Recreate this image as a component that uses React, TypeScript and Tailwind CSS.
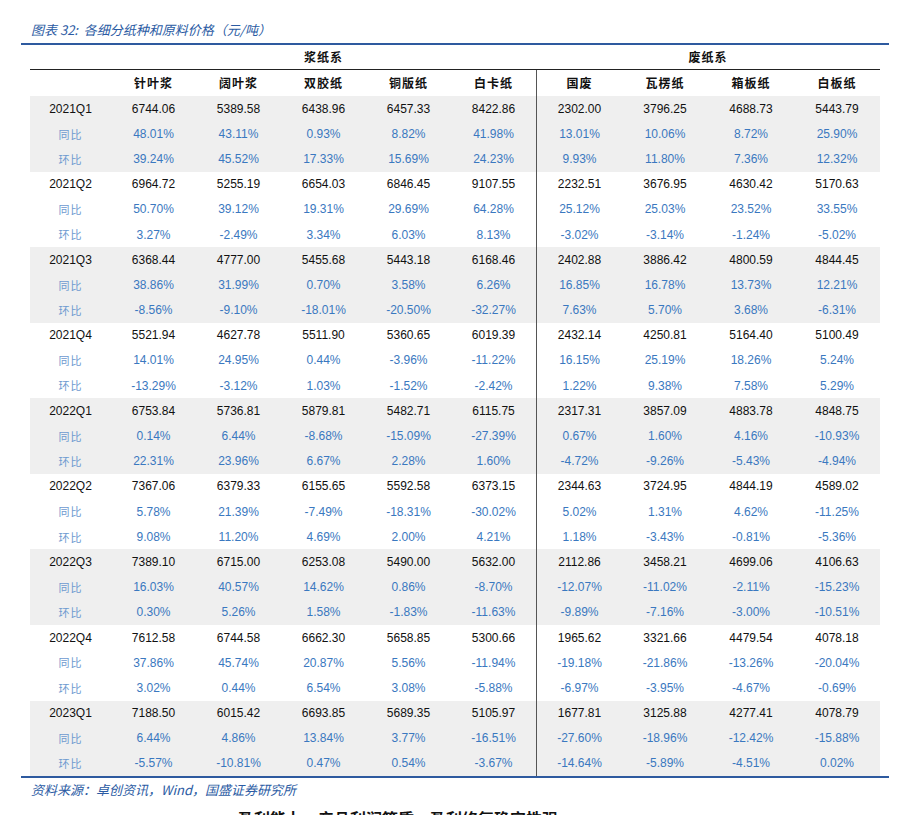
const LEFT = ['针叶浆', '阔叶浆', '双胶纸', '铜版纸', '白卡纸'];
const RIGHT = ['国废', '瓦楞纸', '箱板纸', '白板纸'];

type Block = { q: string; price: string[]; yoy: string[]; qoq: string[] };

const blocks: Block[] = [
  {
    q: '2021Q1',
    price: ['6744.06', '5389.58', '6438.96', '6457.33', '8422.86', '2302.00', '3796.25', '4688.73', '5443.79'],
    yoy: ['48.01%', '43.11%', '0.93%', '8.82%', '41.98%', '13.01%', '10.06%', '8.72%', '25.90%'],
    qoq: ['39.24%', '45.52%', '17.33%', '15.69%', '24.23%', '9.93%', '11.80%', '7.36%', '12.32%'],
  },
  {
    q: '2021Q2',
    price: ['6964.72', '5255.19', '6654.03', '6846.45', '9107.55', '2232.51', '3676.95', '4630.42', '5170.63'],
    yoy: ['50.70%', '39.12%', '19.31%', '29.69%', '64.28%', '25.12%', '25.03%', '23.52%', '33.55%'],
    qoq: ['3.27%', '-2.49%', '3.34%', '6.03%', '8.13%', '-3.02%', '-3.14%', '-1.24%', '-5.02%'],
  },
  {
    q: '2021Q3',
    price: ['6368.44', '4777.00', '5455.68', '5443.18', '6168.46', '2402.88', '3886.42', '4800.59', '4844.45'],
    yoy: ['38.86%', '31.99%', '0.70%', '3.58%', '6.26%', '16.85%', '16.78%', '13.73%', '12.21%'],
    qoq: ['-8.56%', '-9.10%', '-18.01%', '-20.50%', '-32.27%', '7.63%', '5.70%', '3.68%', '-6.31%'],
  },
  {
    q: '2021Q4',
    price: ['5521.94', '4627.78', '5511.90', '5360.65', '6019.39', '2432.14', '4250.81', '5164.40', '5100.49'],
    yoy: ['14.01%', '24.95%', '0.44%', '-3.96%', '-11.22%', '16.15%', '25.19%', '18.26%', '5.24%'],
    qoq: ['-13.29%', '-3.12%', '1.03%', '-1.52%', '-2.42%', '1.22%', '9.38%', '7.58%', '5.29%'],
  },
  {
    q: '2022Q1',
    price: ['6753.84', '5736.81', '5879.81', '5482.71', '6115.75', '2317.31', '3857.09', '4883.78', '4848.75'],
    yoy: ['0.14%', '6.44%', '-8.68%', '-15.09%', '-27.39%', '0.67%', '1.60%', '4.16%', '-10.93%'],
    qoq: ['22.31%', '23.96%', '6.67%', '2.28%', '1.60%', '-4.72%', '-9.26%', '-5.43%', '-4.94%'],
  },
  {
    q: '2022Q2',
    price: ['7367.06', '6379.33', '6155.65', '5592.58', '6373.15', '2344.63', '3724.95', '4844.19', '4589.02'],
    yoy: ['5.78%', '21.39%', '-7.49%', '-18.31%', '-30.02%', '5.02%', '1.31%', '4.62%', '-11.25%'],
    qoq: ['9.08%', '11.20%', '4.69%', '2.00%', '4.21%', '1.18%', '-3.43%', '-0.81%', '-5.36%'],
  },
  {
    q: '2022Q3',
    price: ['7389.10', '6715.00', '6253.08', '5490.00', '5632.00', '2112.86', '3458.21', '4699.06', '4106.63'],
    yoy: ['16.03%', '40.57%', '14.62%', '0.86%', '-8.70%', '-12.07%', '-11.02%', '-2.11%', '-15.23%'],
    qoq: ['0.30%', '5.26%', '1.58%', '-1.83%', '-11.63%', '-9.89%', '-7.16%', '-3.00%', '-10.51%'],
  },
  {
    q: '2022Q4',
    price: ['7612.58', '6744.58', '6662.30', '5658.85', '5300.66', '1965.62', '3321.66', '4479.54', '4078.18'],
    yoy: ['37.86%', '45.74%', '20.87%', '5.56%', '-11.94%', '-19.18%', '-21.86%', '-13.26%', '-20.04%'],
    qoq: ['3.02%', '0.44%', '6.54%', '3.08%', '-5.88%', '-6.97%', '-3.95%', '-4.67%', '-0.69%'],
  },
  {
    q: '2023Q1',
    price: ['7188.50', '6015.42', '6693.85', '5689.35', '5105.97', '1677.81', '3125.88', '4277.41', '4078.79'],
    yoy: ['6.44%', '4.86%', '13.84%', '3.77%', '-16.51%', '-27.60%', '-18.96%', '-12.42%', '-15.88%'],
    qoq: ['-5.57%', '-10.81%', '0.47%', '0.54%', '-3.67%', '-14.64%', '-5.89%', '-4.51%', '0.02%'],
  },
];

const GRID = 'grid grid-cols-[81px_repeat(5,85px)_repeat(4,86px)]';
const NUM = "font-['Liberation_Sans',Arial,sans-serif] text-[12px]";
const CJK = "font-['Noto_Sans_CJK_SC',sans-serif]";

function Row({ label, values, kind, shaded }: { label: string; values: string[]; kind: 'price' | 'ratio'; shaded: boolean }) {
  return (
    <div className={`${GRID} h-[25.2px] ${shaded ? 'bg-[#efefef]' : 'bg-white'}`}>
      <div
        className={
          kind === 'price'
            ? `${NUM} flex items-center justify-center text-[#111]`
            : `${CJK} flex items-center justify-center text-[11px] tracking-[1px] text-[#6d9ad0]`
        }
      >
        {label}
      </div>
      {values.map((v, i) => (
        <div
          key={i}
          className={`${NUM} flex items-center justify-center ${kind === 'price' ? 'text-[#111]' : 'text-[#3a78c0]'} ${i === 5 ? 'border-l border-[#555]' : ''}`}
        >
          {v}
        </div>
      ))}
    </div>
  );
}

export default function App() {
  return (
    <div className="h-[815px] overflow-hidden bg-white">
      <div className="ml-[21px] w-[868px] pt-[20px]">
        <p className={`${CJK} h-[20px] pl-[10px] text-[13px] italic leading-[20px] text-[#2b5ba3]`}>
          图表 32:&nbsp; 各细分纸种和原料价格（元/吨）
        </p>
        <div className="mt-[3px] h-[2px] bg-[#2e5a9f]" />

        <div className="ml-[9px] w-[850px]">
          <div className={`${GRID} h-[25px] border-b border-[#222]`}>
            <div />
            <div className={`${CJK} col-span-5 flex items-center justify-center text-[12px] font-bold tracking-[1px] text-[#111]`}>
              浆纸系
            </div>
            <div className={`${CJK} col-span-4 flex items-center justify-center text-[12px] font-bold tracking-[1px] text-[#111]`}>
              废纸系
            </div>
          </div>
          <div className={`${GRID} h-[26px]`}>
            <div />
            {[...LEFT, ...RIGHT].map((h, i) => (
              <div
                key={h}
                className={`${CJK} flex items-center justify-center text-[12px] font-bold tracking-[1px] text-[#111] ${i === 5 ? 'border-l border-[#555]' : ''}`}
              >
                {h}
              </div>
            ))}
          </div>
          {blocks.map((b, i) => {
            const shaded = i % 2 === 0;
            return (
              <div key={b.q}>
                <Row label={b.q} values={b.price} kind="price" shaded={shaded} />
                <Row label="同比" values={b.yoy} kind="ratio" shaded={shaded} />
                <Row label="环比" values={b.qoq} kind="ratio" shaded={shaded} />
              </div>
            );
          })}
        </div>

        <div className="h-[2px] bg-[#2e5a9f]" />
        <p className={`${CJK} h-[24px] pl-[10px] text-[13px] italic leading-[24px] text-[#2b5ba3]`}>
          资料来源：卓创资讯，Wind，国盛证券研究所
        </p>
        <p className={`${CJK} mt-[6px] pl-[217px] text-[16px] font-bold leading-[20px] text-[#111]`}>
          盈利能力、产品利润等质，盈利修复确定性强
        </p>
      </div>
    </div>
  );
}
